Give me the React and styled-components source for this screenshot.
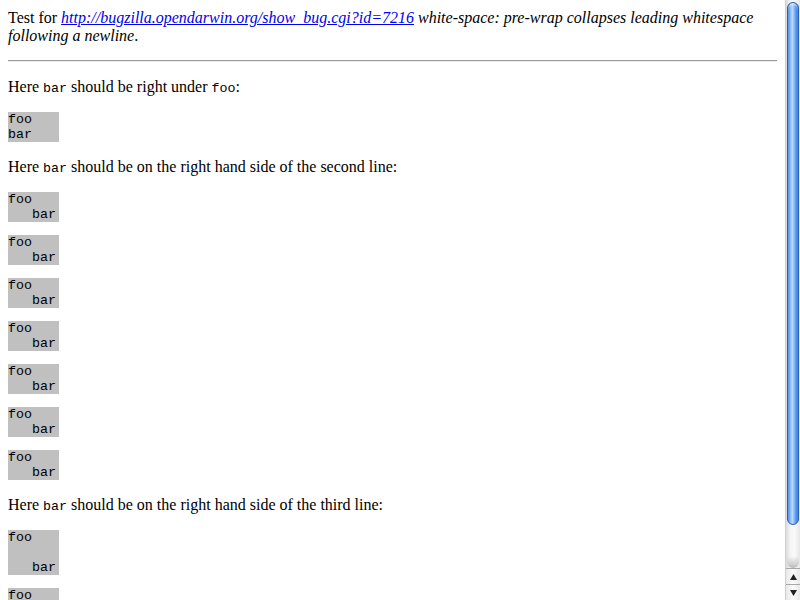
import React from "react";
import styled, { createGlobalStyle } from "styled-components";

const Global = createGlobalStyle`
  html, body { margin: 0; padding: 0; height: 100%; overflow: hidden; background: #fff; }
  #root { height: 100%; }
`;

const Frame = styled.div`
  display: flex;
  width: 800px;
  height: 600px;
  overflow: hidden;
`;

const Page = styled.div`
  flex: 1;
  min-width: 0;
  height: 600px;
  overflow: hidden;
  padding: 8px;
  box-sizing: border-box;
  font-family: "Liberation Serif", "Times New Roman", serif;
  font-size: 16px;
  color: #000;
`;

const Para = styled.p`
  margin: 16px 0;
  line-height: 18px;
  &:first-child { margin-top: 0; padding-top: 1px; margin-bottom: 15px; }
`;

const Em = styled.span`
  font-style: italic;
`;

const Link = styled.a`
  color: #0000ee;
  text-decoration: underline;
  font-style: italic;
`;

const Rule = styled.hr`
  margin: 8px 0;
  border: none;
  border-top: 1px solid #9a9a9a;
  border-bottom: 1px solid #eeeeee;
  height: 0;
`;

const Code = styled.code`
  font-family: "Liberation Mono", "Courier New", monospace;
  font-size: 13.333px;
  line-height: 1;
`;

const Box = styled.pre`
  margin: 13px 0;
  width: 51px;
  background: #c0c0c0;
  font-family: "Liberation Mono", "Courier New", monospace;
  font-size: 13.333px;
  line-height: 15px;
  white-space: pre;
  overflow: hidden;
`;

const Scrollbar = styled.div`
  width: 15px;
  height: 600px;
  display: flex;
  flex-direction: column;
  background: linear-gradient(to right, #dcdcdc, #f4f4f4 30%, #fafafa 60%, #e6e6e6);
  border-left: 1px solid #cfcfcf;
  box-sizing: border-box;
`;

const Track = styled.div`
  flex: 1;
  display: flex;
  flex-direction: column;
  padding: 2px 1px 0 1px;
`;

const Thumb = styled.div`
  height: 523px;
  border-radius: 7px;
  border: 1px solid #2a5fb8;
  box-sizing: border-box;
  background: linear-gradient(to right, #3a7be0 0%, #8fc0ff 25%, #b8d8ff 45%, #7fb4f8 65%, #4a8ae8 85%, #2f6cd0 100%);
  box-shadow: inset 0 2px 2px rgba(255,255,255,0.5);
`;

const TrackEnd = styled.div`
  flex: 1;
  margin-top: 4px;
  border-radius: 0 0 7px 7px;
  background: linear-gradient(to bottom, transparent 70%, #d0d0d0 90%, #b8b8b8);
`;

const Arrow = styled.div`
  height: 16px;
  display: flex;
  align-items: center;
  justify-content: center;
  border-top: 1px solid #a8a8a8;
  box-sizing: border-box;
  background: linear-gradient(to right, #e8e8e8, #fbfbfb 50%, #e8e8e8);
`;

function Tri({ up }) {
  return (
    <svg width="7" height="6" viewBox="0 0 7 6">
      <polygon points={up ? "3.5,0 7,6 0,6" : "0,0 7,0 3.5,6"} fill="#222" />
    </svg>
  );
}

export default function App() {
  const second = Array.from({ length: 7 });
  return (
    <Frame>
      <Global />
      <Page>
        <Para>
          Test for{" "}
          <Link href="#">http://bugzilla.opendarwin.org/show_bug.cgi?id=7216</Link>{" "}
          <Em>white-space: pre-wrap collapses leading whitespace following a newline</Em>.
        </Para>
        <Rule />
        <Para>
          Here <Code>bar</Code> should be right under <Code>foo</Code>:
        </Para>
        <Box>{"foo\nbar"}</Box>
        <Para>
          Here <Code>bar</Code> should be on the right hand side of the second line:
        </Para>
        {second.map((_, i) => (
          <Box key={i}>{"foo\n   bar"}</Box>
        ))}
        <Para>
          Here <Code>bar</Code> should be on the right hand side of the third line:
        </Para>
        <Box>{"foo\n\n   bar"}</Box>
        <Box>{"foo\n\n   bar"}</Box>
      </Page>
      <Scrollbar>
        <Track>
          <Thumb />
          <TrackEnd />
        </Track>
        <Arrow><Tri up /></Arrow>
        <Arrow><Tri /></Arrow>
      </Scrollbar>
    </Frame>
  );
}
